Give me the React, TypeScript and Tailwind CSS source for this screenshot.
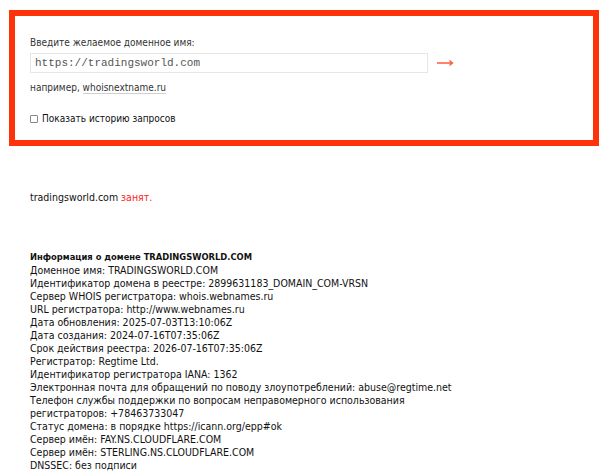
import React from "react";

const info = [
  "Доменное имя: TRADINGSWORLD.COM",
  "Идентификатор домена в реестре: 2899631183_DOMAIN_COM-VRSN",
  "Сервер WHOIS регистратора: whois.webnames.ru",
  "URL регистратора: http://www.webnames.ru",
  "Дата обновления: 2025-07-03T13:10:06Z",
  "Дата создания: 2024-07-16T07:35:06Z",
  "Срок действия реестра: 2026-07-16T07:35:06Z",
  "Регистратор: Regtime Ltd.",
  "Идентификатор регистратора IANA: 1362",
  "Электронная почта для обращений по поводу злоупотреблений: abuse@regtime.net",
  "Телефон службы поддержки по вопросам неправомерного использования\nрегистраторов: +78463733047",
  "Статус домена: в порядке https://icann.org/epp#ok",
  "Сервер имён: FAY.NS.CLOUDFLARE.COM",
  "Сервер имён: STERLING.NS.CLOUDFLARE.COM",
  "DNSSEC: без подписи",
];

export default function App() {
  return (
    <div className="w-[602px] h-[474px] overflow-hidden bg-white text-[#111] font-['DejaVu_Sans_Condensed','DejaVu_Sans',sans-serif] text-[10.5px] leading-[13px]">
      <div className="ml-[9px] mt-[10px] w-[590px] h-[136px] border-[6px] border-[#ff3209] pl-[15px] pt-[20px] text-[10px]">
        <div className="text-[#333]">Введите желаемое доменное имя:</div>
        <div className="mt-[4px] flex items-center">
          <div className="w-[398px] h-[20px] border border-[#e6e6e6] bg-white flex items-center pl-[4px] font-['Liberation_Mono',monospace] text-[11px] text-[#555]">
            https://tradingsworld.com
          </div>
          <svg className="ml-[9px]" width="17" height="8" viewBox="0 0 17 8">
            <path d="M0 4h15.5M12.5 1.5L15.5 4L12.5 6.5" stroke="#ff5a3c" strokeWidth="1.3" fill="none" />
          </svg>
        </div>
        <div className="mt-[8px] text-[#333]">
          например, <span className="border-b border-[#cfcfcf]">whoisnextname.ru</span>
        </div>
        <label className="mt-[18px] flex items-center gap-[4px] text-[#111]">
          <span className="w-[8px] h-[8px] border border-[#888] rounded-[1px] bg-white" />
          Показать историю запросов
        </label>
      </div>

      <div className="ml-[30px] mt-[45px]">
        tradingsworld.com <span className="text-[#ff2222]">занят.</span>
      </div>

      <div className="ml-[30px] mt-[46px] font-bold text-[9.3px]">Информация о домене TRADINGSWORLD.COM</div>

      <div className="ml-[30px] mt-[1px] w-[470px] whitespace-pre-line">
        {info.map((line) => (
          <div key={line}>{line}</div>
        ))}
      </div>
    </div>
  );
}
